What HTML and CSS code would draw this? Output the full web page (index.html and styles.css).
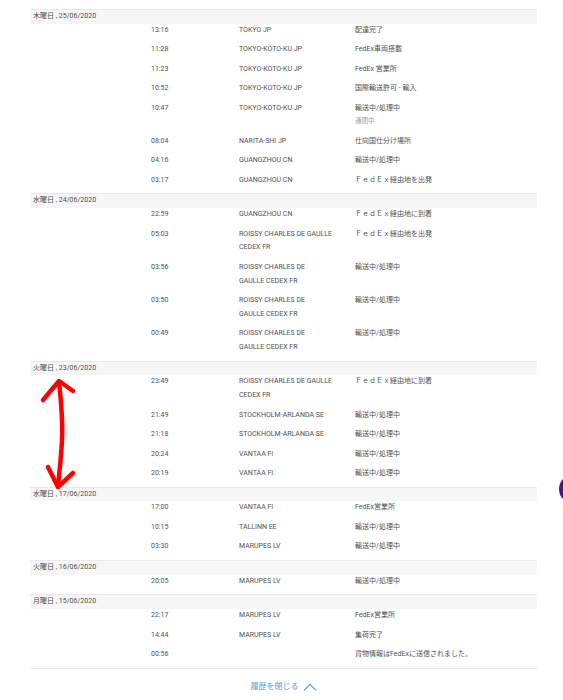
FILE: index.html
```html
<!DOCTYPE html>
<html lang="ja">
<head>
<meta charset="utf-8">
<title>配送履歴</title>
<link rel="stylesheet" href="styles.css">
</head>
<body>
<div class="history">
  <div class="day">
    <div class="day-head">木曜日 , 25/06/2020</div>
    <div class="ev"><span class="t">13:16</span><span class="loc">TOKYO JP</span><span class="st">配達完了</span></div>
    <div class="ev"><span class="t">11:28</span><span class="loc">TOKYO-KOTO-KU JP</span><span class="st">FedEx車両搭載</span></div>
    <div class="ev"><span class="t">11:23</span><span class="loc">TOKYO-KOTO-KU JP</span><span class="st">FedEx 営業所</span></div>
    <div class="ev"><span class="t">10:52</span><span class="loc">TOKYO-KOTO-KU JP</span><span class="st">国際輸送許可 - 輸入</span></div>
    <div class="ev"><span class="t">10:47</span><span class="loc">TOKYO-KOTO-KU JP</span><span class="st">輸送中/処理中<span class="sub">通関中</span></span></div>
    <div class="ev"><span class="t">08:04</span><span class="loc">NARITA-SHI JP</span><span class="st">仕向国仕分け場所</span></div>
    <div class="ev"><span class="t">04:16</span><span class="loc">GUANGZHOU CN</span><span class="st">輸送中/処理中</span></div>
    <div class="ev"><span class="t">03:17</span><span class="loc">GUANGZHOU CN</span><span class="st">ＦｅｄＥｘ経由地を出発</span></div>
  </div>
  <div class="day">
    <div class="day-head">水曜日 , 24/06/2020</div>
    <div class="ev"><span class="t">22:59</span><span class="loc">GUANGZHOU CN</span><span class="st">ＦｅｄＥｘ経由地に到着</span></div>
    <div class="ev"><span class="t">05:03</span><span class="loc">ROISSY CHARLES DE GAULLE<br>CEDEX FR</span><span class="st">ＦｅｄＥｘ経由地を出発</span></div>
    <div class="ev"><span class="t">03:56</span><span class="loc">ROISSY CHARLES DE<br>GAULLE CEDEX FR</span><span class="st">輸送中/処理中</span></div>
    <div class="ev"><span class="t">03:50</span><span class="loc">ROISSY CHARLES DE<br>GAULLE CEDEX FR</span><span class="st">輸送中/処理中</span></div>
    <div class="ev"><span class="t">00:49</span><span class="loc">ROISSY CHARLES DE<br>GAULLE CEDEX FR</span><span class="st">輸送中/処理中</span></div>
  </div>
  <div class="day">
    <div class="day-head">火曜日 , 23/06/2020</div>
    <div class="ev"><span class="t">23:49</span><span class="loc">ROISSY CHARLES DE GAULLE<br>CEDEX FR</span><span class="st">ＦｅｄＥｘ経由地に到着</span></div>
    <div class="ev"><span class="t">21:49</span><span class="loc">STOCKHOLM-ARLANDA SE</span><span class="st">輸送中/処理中</span></div>
    <div class="ev"><span class="t">21:18</span><span class="loc">STOCKHOLM-ARLANDA SE</span><span class="st">輸送中/処理中</span></div>
    <div class="ev"><span class="t">20:24</span><span class="loc">VANTAA FI</span><span class="st">輸送中/処理中</span></div>
    <div class="ev"><span class="t">20:19</span><span class="loc">VANTAA FI</span><span class="st">輸送中/処理中</span></div>
  </div>
  <div class="day">
    <div class="day-head">水曜日 , 17/06/2020</div>
    <div class="ev"><span class="t">17:00</span><span class="loc">VANTAA FI</span><span class="st">FedEx営業所</span></div>
    <div class="ev"><span class="t">10:15</span><span class="loc">TALLINN EE</span><span class="st">輸送中/処理中</span></div>
    <div class="ev"><span class="t">03:30</span><span class="loc">MARUPES LV</span><span class="st">輸送中/処理中</span></div>
  </div>
  <div class="day">
    <div class="day-head">火曜日 , 16/06/2020</div>
    <div class="ev"><span class="t">20:05</span><span class="loc">MARUPES LV</span><span class="st">輸送中/処理中</span></div>
  </div>
  <div class="day">
    <div class="day-head">月曜日 , 15/06/2020</div>
    <div class="ev"><span class="t">22:17</span><span class="loc">MARUPES LV</span><span class="st">FedEx営業所</span></div>
    <div class="ev"><span class="t">14:44</span><span class="loc">MARUPES LV</span><span class="st">集荷完了</span></div>
    <div class="ev"><span class="t">00:56</span><span class="loc"></span><span class="st">貨物情報はFedExに送信されました。</span></div>
  </div>
  <div class="history-end">
    <a class="close" href="#">履歴を閉じる
      <svg class="chev" width="14" height="8" viewBox="0 0 14 8"><path d="M1 7.3 L7 1.3 L13 7.3" fill="none" stroke="#4aa3df" stroke-width="1.2"/></svg>
    </a>
  </div>
</div>

<svg class="arrow" width="50" height="125" viewBox="35 370 50 125">
  <path d="M59 382 C61 400 63 420 62 440 C61 460 59 475 58 486" fill="none" stroke="#ff0000" stroke-width="4.5" stroke-linecap="round"/>
  <path d="M43 400 L59 381 L73 391" fill="none" stroke="#ff0000" stroke-width="4.5" stroke-linecap="round" stroke-linejoin="round"/>
  <path d="M48 467 L58 487 L73 473" fill="none" stroke="#ff0000" stroke-width="4.5" stroke-linecap="round" stroke-linejoin="round"/>
</svg>
<div class="fab"></div>
</body>
</html>
```

FILE: styles.css
```css
html, body {
  margin: 0;
  background: #ffffff;
}
body {
  padding: 8.8px 0 0 30px;
  font-family: Roboto, "Noto Sans CJK JP", sans-serif;
  font-size: 7px;
  color: #505050;
  overflow: hidden;
  height: 700px;
  box-sizing: border-box;
}
.history {
  width: 507px;
}
.day-head {
  box-sizing: border-box;
  height: 14.8px;
  line-height: 13.8px;
  border-top: 1px solid #e9e9e9;
  background: #f6f6f6;
  padding-left: 3px;
}
.ev {
  display: grid;
  grid-template-columns: 121px 88px 116px 1fr;
  line-height: 13.8px;
  padding-bottom: 5.7px;
}
.t { grid-column: 2; }
.loc { grid-column: 3; }
.st { grid-column: 4; }
.sub {
  display: block;
  color: #a0a0a0;
  font-size: 6.5px;
}
.history-end {
  border-top: 1px solid #e6e6e6;
  margin-top: 0.5px;
  padding-top: 11px;
  display: flex;
  justify-content: center;
}
.close {
  display: flex;
  align-items: center;
  gap: 4px;
  color: #4aa3df;
  text-decoration: none;
  font-size: 8px;
  line-height: 14px;
}
.chev {
  display: block;
}
.arrow {
  position: absolute;
  left: 35px;
  top: 370px;
}
.fab {
  position: absolute;
  left: 559px;
  top: 474px;
  width: 30px;
  height: 30px;
  border-radius: 50%;
  background: #4d148c;
}
```
